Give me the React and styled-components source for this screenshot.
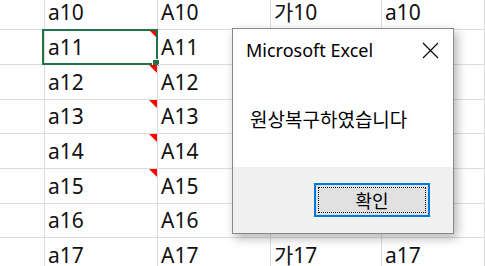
import React from 'react';
import styled, { createGlobalStyle } from 'styled-components';

const GlobalStyle = createGlobalStyle`
  html, body {
    margin: 0;
    padding: 0;
    background: #fff;
    overflow: hidden;
  }
`;

const Page = styled.div`
  position: relative;
  width: 485px;
  height: 266px;
  overflow: hidden;
  font-family: 'Noto Sans', 'Noto Sans CJK KR', sans-serif;
`;

const Sheet = styled.div`
  display: grid;
  grid-template-columns: 45px 113px 113px 111px 1fr;
  grid-template-rows: 30px 35px 35px 34px 35px 35px 34px 35px;
`;

const Cell = styled.div`
  position: relative;
  display: flex;
  align-items: flex-end;
  padding: 0 0 6px 3px;
  border-right: 1px solid #dcdcdc;
  border-bottom: 1px solid #dcdcdc;
  font-size: 21px;
  line-height: 1;
  color: #111;
  white-space: nowrap;
`;

const Comment = styled.span`
  position: absolute;
  top: 0;
  right: 0;
  width: 0;
  height: 0;
  border-top: 8px solid #ff0000;
  border-left: 8px solid transparent;
`;

const Selection = styled.span`
  position: absolute;
  left: -3px;
  top: -1px;
  right: -1px;
  bottom: -1px;
  border: 2px solid #217346;
  pointer-events: none;
`;

const FillHandle = styled.span`
  position: absolute;
  right: -4px;
  bottom: -4px;
  width: 6px;
  height: 6px;
  background: #217346;
  border: 1px solid #fff;
`;

const Dialog = styled.div`
  position: absolute;
  left: 232px;
  top: 28px;
  width: 220px;
  height: 204px;
  display: flex;
  flex-direction: column;
  background: #fff;
  border: 1px solid #8a8a8a;
  box-shadow: 3px 4px 10px rgba(0, 0, 0, 0.3);
`;

const TitleBar = styled.div`
  display: flex;
  align-items: center;
  justify-content: space-between;
  height: 42px;
  padding: 0 14px 0 13px;
  font-size: 18px;
  color: #000;
`;

const Message = styled.div`
  flex: 1;
  padding: 35px 0 0 17px;
  font-family: 'Noto Sans CJK KR', sans-serif;
  font-size: 19px;
  line-height: 1.4;
  color: #000;
`;

const Footer = styled.div`
  display: flex;
  justify-content: flex-end;
  align-items: flex-start;
  height: 66px;
  padding: 16px 23px 0 0;
  box-sizing: border-box;
  background: #f0f0f0;
`;

const Button = styled.button`
  width: 116px;
  height: 34px;
  padding: 2px;
  border: 2px solid #0078d7;
  background: #e1e1e1;
  font-family: 'Noto Sans CJK KR', sans-serif;
  font-size: 18px;
  color: #000;
  box-sizing: border-box;
`;

const Focus = styled.span`
  display: flex;
  align-items: center;
  justify-content: center;
  height: 100%;
  border: 1px dotted #000;
  box-sizing: border-box;
`;

const rows = [
  ['a10', 'A10', '가10', 'a10'],
  ['a11', 'A11', '가11', 'a11'],
  ['a12', 'A12', '가12', 'a12'],
  ['a13', 'A13', '가13', 'a13'],
  ['a14', 'A14', '가14', 'a14'],
  ['a15', 'A15', '가15', 'a15'],
  ['a16', 'A16', '가16', 'a16'],
  ['a17', 'A17', '가17', 'a17'],
];

const withComment = ['a11', 'a12', 'a13', 'a14', 'a15'];

function CloseIcon() {
  return (
    <svg width="17" height="17" viewBox="0 0 17 17">
      <path d="M1 1 L16 16 M16 1 L1 16" stroke="#000" strokeWidth="1.1" fill="none" />
    </svg>
  );
}

export default function App() {
  return (
    <Page>
      <GlobalStyle />
      <Sheet>
        {rows.map((row, rowIndex) => (
          <React.Fragment key={rowIndex}>
            <Cell />
            {row.map((value, colIndex) => (
              <Cell key={colIndex}>
                {value}
                {colIndex === 0 && withComment.includes(value) && <Comment />}
                {colIndex === 0 && value === 'a11' && (
                  <Selection>
                    <FillHandle />
                  </Selection>
                )}
              </Cell>
            ))}
          </React.Fragment>
        ))}
      </Sheet>
      <Dialog>
        <TitleBar>
          <span>Microsoft Excel</span>
          <CloseIcon />
        </TitleBar>
        <Message>원상복구하였습니다</Message>
        <Footer>
          <Button>
            <Focus>확인</Focus>
          </Button>
        </Footer>
      </Dialog>
    </Page>
  );
}
